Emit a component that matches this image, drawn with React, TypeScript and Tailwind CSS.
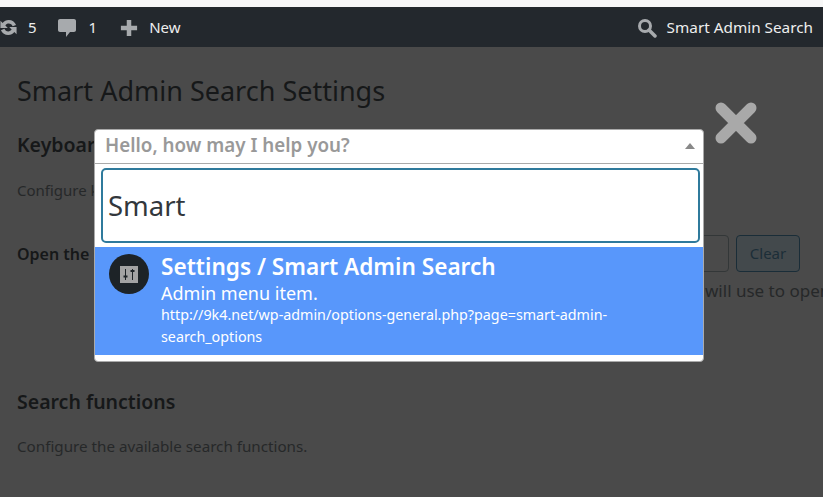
const font = "font-['Noto_Sans',sans-serif]";

function UpdateIcon() {
  return (
    <svg viewBox="0 0 20 20" className="w-[21px] h-[21px] fill-[#a7aaad]">
      <path d="M10.200 2.800c-2.300 0-4.400 1-5.800 2.800L2.300 3.500v7h7L7 8c.8-1.100 1.900-1.700 3.200-1.700 1.700 0 3.100 1 3.700 2.500l3.300-1.300c-1.100-2.900-3.900-4.700-7-4.700zM10.700 9.500l2.300 2.500c-.8 1.100-1.900 1.700-3.200 1.700-1.700 0-3.100-1-3.700-2.500l-3.300 1.300c1.100 2.900 3.900 4.700 7 4.700 2.300 0 4.400-1 5.800-2.800l2.100 2.100v-7z" />
    </svg>
  );
}

function CommentIcon() {
  return (
    <svg viewBox="0 0 20 20" className="w-5 h-5 fill-[#a7aaad]">
      <path d="M3 1h14c1.100 0 2 .9 2 2v9c0 1.100-.9 2-2 2h-4l-4 5v-5H3c-1.100 0-2-.9-2-2V3c0-1.100.9-2 2-2z" />
    </svg>
  );
}

function PlusIcon() {
  return (
    <svg viewBox="0 0 20 20" className="w-[18px] h-[18px] fill-[#a7aaad]">
      <path d="M7.500 1h5v6.500H19v5h-6.500V19h-5v-6.500H1v-5h6.500z" />
    </svg>
  );
}

function SearchIcon() {
  return (
    <svg viewBox="0 0 20 20" className="w-5 h-5">
      <circle cx="8" cy="8" r="5.500" fill="none" stroke="#a7aaad" strokeWidth="3" />
      <path d="M12 12l6 6" stroke="#a7aaad" strokeWidth="3.500" strokeLinecap="round" />
    </svg>
  );
}

function SettingsIcon() {
  return (
    <svg viewBox="0 0 18 17" className="w-[18px] h-[17px]">
      <rect width="18" height="17" fill="#a3a3a3" />
      <path d="M5.500 3v11M12.500 3v11" stroke="#1d2327" strokeWidth="1" />
      <path d="M3.500 10.500h4M10.500 5h4" stroke="#1d2327" strokeWidth="2" />
    </svg>
  );
}

export default function App() {
  return (
    <div className={`${font} relative w-[823px] h-[497px] overflow-hidden bg-[#4a4a4a]`}>
      <div className="h-[7px] bg-[#f7f7f7]" />
      <div className="h-[40px] pt-[1px] bg-[#23282d] flex items-center text-[15px] text-[#eeeeee]">
        <div className="flex items-center gap-[9px] -ml-[2px]">
          <UpdateIcon />
          <span>5</span>
        </div>
        <div className="flex items-center gap-[12px] ml-[20px]">
          <CommentIcon />
          <span>1</span>
        </div>
        <div className="flex items-center gap-[11px] ml-[23px]">
          <PlusIcon />
          <span>New</span>
        </div>
        <div className="flex items-center gap-[10px] ml-auto mr-[10px]">
          <SearchIcon />
          <span className="text-[15.300px]">Smart Admin Search</span>
        </div>
      </div>

      <div className="pl-[17px] text-[#161819]">
        <h1 className="text-[27px] leading-[36px] mt-[26px]">Smart Admin Search Settings</h1>
        <h2 className="text-[19.500px] leading-[28px] font-semibold mt-[22px]">Keyboard shortcuts</h2>
        <p className="text-[15px] leading-[20px] mt-[21px] text-[#262829]">Configure keyboard shortcuts.</p>
        <div className="flex items-center mt-[34px] h-[38px]">
          <span className="text-[16px] font-semibold pt-[2px]">Open the search box</span>
          <div className="ml-auto w-[40px] h-[37px] border border-[#333738] rounded-[4px]" />
          <button className="ml-[7px] mr-[23px] w-[64px] h-[37px] rounded-[4px] border border-[#1a2d38] bg-[#43494c] text-[15px] text-[#1c2e38]">
            Clear
          </button>
        </div>
        <p className="text-[17px] leading-[20px] mt-[9px] ml-[688px] whitespace-nowrap text-[#262829]">will use to open</p>
        <h2 className="text-[19.500px] leading-[28px] font-semibold mt-[87px]">Search functions</h2>
        <p className="text-[15.200px] leading-[20px] mt-[20px] text-[#262829]">Configure the available search functions.</p>
      </div>

      <svg viewBox="0 0 44 44" className="absolute left-[714px] top-[101px] w-[44px] h-[44px]">
        <path d="M7 7l30 30M37 7L7 37" stroke="#a9a9a9" strokeWidth="11" strokeLinecap="round" />
      </svg>

      <div className="absolute left-[94px] top-[129px] w-[610px] h-[233px] bg-white border border-[#aaaaaa] rounded-[4px] overflow-hidden flex flex-col">
        <div className="h-[34px] shrink-0 flex items-center justify-between pl-[10px] pr-[8px] pb-[2px] border-b border-[#aaaaaa]">
          <span className="text-[18.800px] font-semibold text-[#999999]">Hello, how may I help you?</span>
          <span className="w-0 h-0 border-x-[5px] border-x-transparent border-b-[6px] border-b-[#888888]" />
        </div>
        <div className="pl-[6px] pr-[3px] pt-[4px] pb-[4px]">
          <div className="h-[75px] border-2 border-[#2f7a9c] rounded-[5px] flex items-center pl-[5px] text-[27.500px] text-[#32373c]">Smart</div>
        </div>
        <div className="bg-[#5897fb] text-white flex gap-[12px] pl-[14px] pr-[90px] h-[108px]">
          <div className="w-[40px] h-[40px] mt-[7px] shrink-0 rounded-full bg-[#1d2327] flex items-center justify-center">
            <SettingsIcon />
          </div>
          <div className="min-w-0">
            <div className="text-[22.600px] leading-[30px] font-semibold mt-[5px]">Settings / Smart Admin Search</div>
            <div className="text-[18px] leading-[22px]">Admin menu item.</div>
            <div className="text-[14.300px] leading-[22px] break-words">http://9k4.net/wp-admin/options-general.php?page=smart-admin-search_options</div>
          </div>
        </div>
      </div>
    </div>
  );
}
